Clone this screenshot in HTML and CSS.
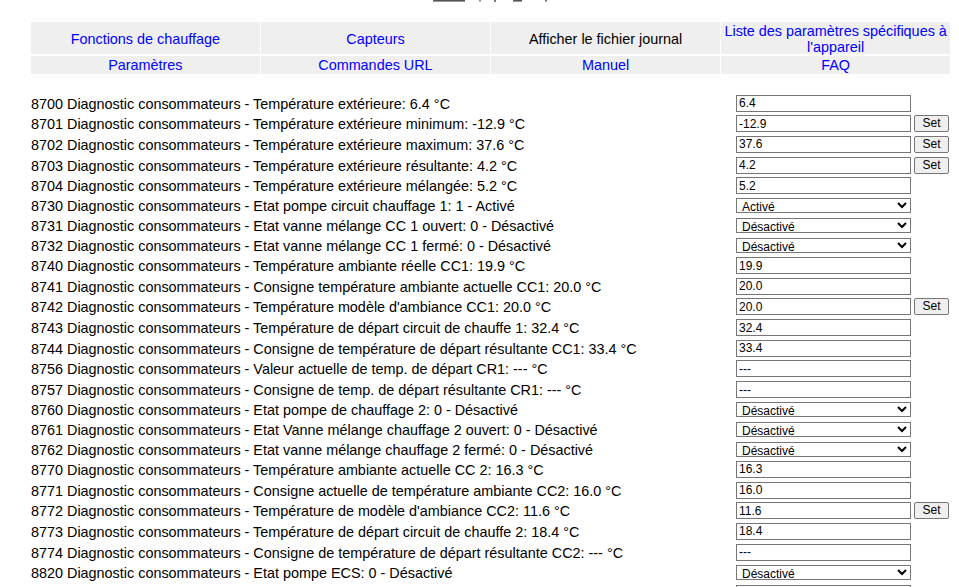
FILE: index.html
```html
<!DOCTYPE html>
<html lang="fr">
<head>
<meta charset="utf-8">
<title>BSB-LAN</title>
<link rel="stylesheet" href="styles.css">
</head>
<body>
<div class="logo-strip">
  <svg width="959" height="3" viewBox="0 0 959 3" aria-hidden="true">
    <rect x="433" y="0" width="32" height="1.6" fill="#555"/>
    <rect x="479" y="0" width="2" height="1.4" fill="#888"/>
    <rect x="494" y="0" width="2" height="2" fill="#777"/>
    <rect x="513" y="0" width="9" height="1.6" fill="#555"/>
    <rect x="545" y="0" width="2" height="1.6" fill="#777"/>
  </svg>
</div>
<nav class="nav">
  <div class="cell"><a href="#">Fonctions de chauffage</a></div>
  <div class="cell"><a href="#">Capteurs</a></div>
  <div class="cell"><span class="plain">Afficher le fichier journal</span></div>
  <div class="cell"><a href="#">Liste des paramètres spécifiques à l'appareil</a></div>
  <div class="cell small"><a href="#">Paramètres</a></div>
  <div class="cell small"><a href="#">Commandes URL</a></div>
  <div class="cell small"><a href="#">Manuel</a></div>
  <div class="cell small"><a href="#">FAQ</a></div>
</nav>

<div class="list">
  <div class="row"><span class="label">8700 Diagnostic consommateurs - Température extérieure: 6.4 °C</span><input class="val" type="text" value="6.4"></div>
  <div class="row"><span class="label">8701 Diagnostic consommateurs - Température extérieure minimum: -12.9 °C</span><input class="val" type="text" value="-12.9"><button class="set">Set</button></div>
  <div class="row"><span class="label">8702 Diagnostic consommateurs - Température extérieure maximum: 37.6 °C</span><input class="val" type="text" value="37.6"><button class="set">Set</button></div>
  <div class="row"><span class="label">8703 Diagnostic consommateurs - Température extérieure résultante: 4.2 °C</span><input class="val" type="text" value="4.2"><button class="set">Set</button></div>
  <div class="row"><span class="label">8704 Diagnostic consommateurs - Température extérieure mélangée: 5.2 °C</span><input class="val" type="text" value="5.2"></div>
  <div class="row sel"><span class="label">8730 Diagnostic consommateurs - Etat pompe circuit chauffage 1: 1 - Activé</span><select class="choice"><option>Activé</option><option>Désactivé</option></select></div>
  <div class="row sel"><span class="label">8731 Diagnostic consommateurs - Etat vanne mélange CC 1 ouvert: 0 - Désactivé</span><select class="choice"><option>Désactivé</option><option>Activé</option></select></div>
  <div class="row sel"><span class="label">8732 Diagnostic consommateurs - Etat vanne mélange CC 1 fermé: 0 - Désactivé</span><select class="choice"><option>Désactivé</option><option>Activé</option></select></div>
  <div class="row"><span class="label">8740 Diagnostic consommateurs - Température ambiante réelle CC1: 19.9 °C</span><input class="val" type="text" value="19.9"></div>
  <div class="row"><span class="label">8741 Diagnostic consommateurs - Consigne température ambiante actuelle CC1: 20.0 °C</span><input class="val" type="text" value="20.0"></div>
  <div class="row"><span class="label">8742 Diagnostic consommateurs - Température modèle d'ambiance CC1: 20.0 °C</span><input class="val" type="text" value="20.0"><button class="set">Set</button></div>
  <div class="row"><span class="label">8743 Diagnostic consommateurs - Température de départ circuit de chauffe 1: 32.4 °C</span><input class="val" type="text" value="32.4"></div>
  <div class="row"><span class="label">8744 Diagnostic consommateurs - Consigne de température de départ résultante CC1: 33.4 °C</span><input class="val" type="text" value="33.4"></div>
  <div class="row"><span class="label">8756 Diagnostic consommateurs - Valeur actuelle de temp. de départ CR1: --- °C</span><input class="val" type="text" value="---"></div>
  <div class="row"><span class="label">8757 Diagnostic consommateurs - Consigne de temp. de départ résultante CR1: --- °C</span><input class="val" type="text" value="---"></div>
  <div class="row sel"><span class="label">8760 Diagnostic consommateurs - Etat pompe de chauffage 2: 0 - Désactivé</span><select class="choice"><option>Désactivé</option><option>Activé</option></select></div>
  <div class="row sel"><span class="label">8761 Diagnostic consommateurs - Etat Vanne mélange chauffage 2 ouvert: 0 - Désactivé</span><select class="choice"><option>Désactivé</option><option>Activé</option></select></div>
  <div class="row sel"><span class="label">8762 Diagnostic consommateurs - Etat vanne mélange chauffage 2 fermé: 0 - Désactivé</span><select class="choice"><option>Désactivé</option><option>Activé</option></select></div>
  <div class="row"><span class="label">8770 Diagnostic consommateurs - Température ambiante actuelle CC 2: 16.3 °C</span><input class="val" type="text" value="16.3"></div>
  <div class="row"><span class="label">8771 Diagnostic consommateurs - Consigne actuelle de température ambiante CC2: 16.0 °C</span><input class="val" type="text" value="16.0"></div>
  <div class="row"><span class="label">8772 Diagnostic consommateurs - Température de modèle d'ambiance CC2: 11.6 °C</span><input class="val" type="text" value="11.6"><button class="set">Set</button></div>
  <div class="row"><span class="label">8773 Diagnostic consommateurs - Température de départ circuit de chauffe 2: 18.4 °C</span><input class="val" type="text" value="18.4"></div>
  <div class="row"><span class="label">8774 Diagnostic consommateurs - Consigne de température de départ résultante CC2: --- °C</span><input class="val" type="text" value="---"></div>
  <div class="row sel"><span class="label">8820 Diagnostic consommateurs - Etat pompe ECS: 0 - Désactivé</span><select class="choice"><option>Désactivé</option><option>Activé</option></select></div>
  <div class="row sel"><span class="label"></span><span class="stub"></span></div>
</div>
</body>
</html>
```

FILE: styles.css
```css
html, body {
  margin: 0;
  padding: 0;
  background: #ffffff;
  overflow: hidden;
}

body {
  font-family: "Liberation Sans", Arial, sans-serif;
  font-size: 14.4px;
  color: #000000;
  width: 959px;
  height: 587px;
}

.logo-strip {
  height: 22px;
}

.logo-strip svg {
  display: block;
}

.nav {
  display: grid;
  grid-template-columns: repeat(4, 1fr);
  grid-template-rows: 32.4px 18px;
  gap: 1.4px;
  width: 919px;
  margin-left: 31px;
  background: #ffffff;
}

.cell {
  background: #efefef;
  display: flex;
  align-items: center;
  justify-content: center;
  text-align: center;
  line-height: 16px;
  padding-top: 1.4px;
  box-sizing: border-box;
}

.cell a {
  color: #0000ff;
  text-decoration: none;
}

.cell .plain {
  color: #000000;
}

.list {
  margin-top: 18.9px;
  margin-left: 31px;
  display: flex;
  flex-direction: column;
}

.row {
  display: flex;
  align-items: center;
  height: 20.7px;
}

.row.sel {
  height: 19.7px;
}

.label {
  width: 705px;
  flex: none;
  white-space: nowrap;
  line-height: 16px;
  padding-top: 1px;
}

.val {
  box-sizing: border-box;
  width: 175px;
  height: 17px;
  margin: 0;
  padding: 0 2px;
  border: 1px solid #767676;
  border-radius: 0;
  font-family: "Liberation Sans", Arial, sans-serif;
  font-size: 12px;
  color: #000000;
  background: #ffffff;
}

.choice {
  box-sizing: border-box;
  width: 175px;
  height: 15px;
  margin: 0;
  padding: 0 1px;
  border: 1px solid #767676;
  border-radius: 0;
  font-family: "Liberation Sans", Arial, sans-serif;
  font-size: 12px;
  color: #000000;
  background: #ffffff;
}

.stub {
  box-sizing: border-box;
  width: 175px;
  height: 15px;
  border: 1px solid #767676;
  background: #ffffff;
}

.set {
  box-sizing: border-box;
  width: 35px;
  height: 17px;
  margin: 0 0 0 3px;
  padding: 0;
  border: 1px solid #767676;
  border-radius: 2px;
  background: #efefef;
  font-family: "Liberation Sans", Arial, sans-serif;
  font-size: 12px;
  color: #000000;
  line-height: 15px;
}
```
